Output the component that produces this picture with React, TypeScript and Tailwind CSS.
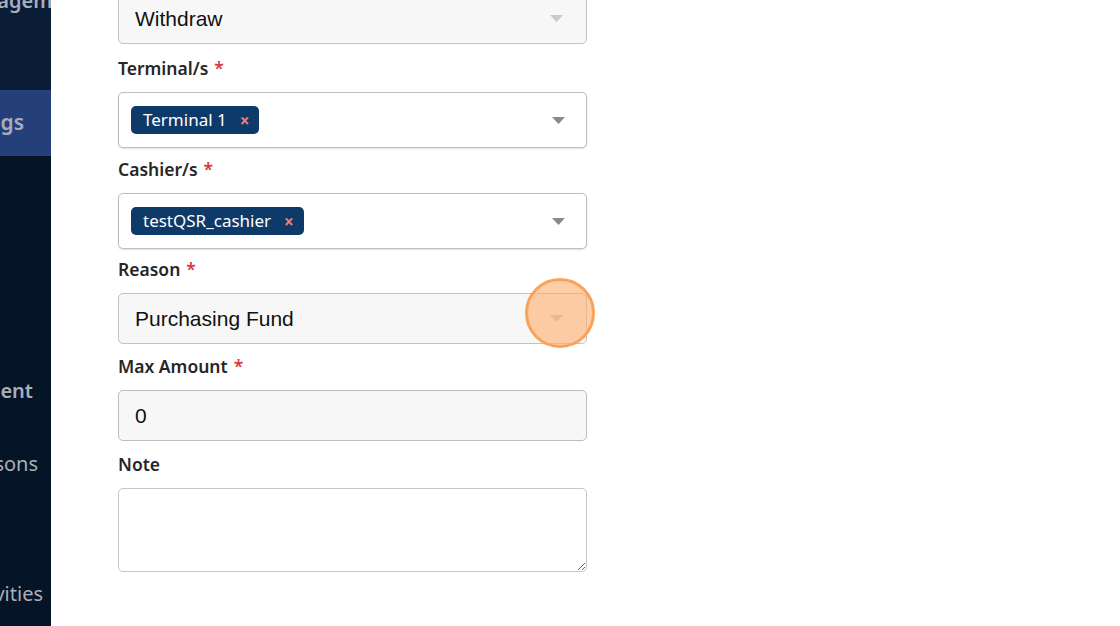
import React from "react";

const sans = "font-['Noto_Sans',_'Open_Sans',_sans-serif]";
const inputFont = "font-['Liberation_Sans',_Arial,_sans-serif]";

function Caret({ light }: { light?: boolean }) {
  return (
    <svg width="13" height="7" viewBox="0 0 13 7" className="shrink-0">
      <path d="M0 0 L13 0 L6.5 7 Z" fill={light ? "#c9c9c9" : "#8a8a8a"} />
    </svg>
  );
}

function Label({ text, required, pt }: { text: string; required?: boolean; pt: string }) {
  return (
    <div className={`${pt} pb-[12px] leading-[24px] text-[17.5px] font-semibold text-[#262626] ${sans}`}>
      {text}
      {required && <span className="ml-[6px] text-[#d93a42]">*</span>}
    </div>
  );
}

function Tag({ text }: { text: string }) {
  return (
    <span
      className={`inline-flex h-[28px] items-center rounded-[5px] bg-[#0d3a69] pl-[12px] pr-[10px] text-[17px] text-white ${sans}`}
    >
      {text}
      <span className="ml-[13px] text-[17px] font-bold leading-none text-[#ec7d7d]">×</span>
    </span>
  );
}

function SelectBox({ value }: { value: string }) {
  return (
    <div className="flex h-[51px] items-center justify-between rounded-[5px] border border-[#c2c2c2] bg-[#f7f7f7] pl-[16px] pr-[23px]">
      <span className={`text-[21px] text-[#111] ${inputFont}`}>{value}</span>
      <Caret light />
    </div>
  );
}

function MultiBox({ tag }: { tag: string }) {
  return (
    <div className="flex h-[56px] items-center justify-between rounded-[5px] border border-[#bdbdbd] bg-white pl-[12px] pr-[21px] shadow-[0_1px_2px_rgba(0,0,0,0.12)]">
      <Tag text={tag} />
      <Caret />
    </div>
  );
}

function Sidebar() {
  const item = "flex justify-end overflow-hidden whitespace-nowrap text-[20px] text-[#a9afba]";
  return (
    <aside className={`flex w-[51px] shrink-0 flex-col bg-[#051427] ${sans}`}>
      <div className="h-[90px] bg-[#0b1d36]">
        <div className={`${item} -mt-[14px] font-semibold`}>
          <span className="-mr-[34px]">Cash Management</span>
        </div>
      </div>
      <div className={`${item} h-[66px] items-center bg-[#243f79] pr-[27px] text-[21px] font-semibold text-[#939db2]`}>
        Settings
      </div>
      <div className={`${item} mt-[221px] h-[28px] items-center pr-[18px] font-semibold`}>
        Cash Management
      </div>
      <div className={`${item} mt-[45px] h-[28px] items-center pr-[13px]`}>
        Reasons
      </div>
      <div className={`${item} mt-[102px] h-[28px] items-center pr-[8px]`}>
        Activities
      </div>
    </aside>
  );
}

export default function App() {
  return (
    <div className="flex h-[626px] w-[1120px] overflow-hidden bg-white">
      <Sidebar />
      <main className="relative flex-1 pl-[67px]">
        <div className="-mt-[7px] w-[469px]">
          <SelectBox value="Withdraw" />

          <Label text="Terminal/s" required pt="pt-[12px]" />
          <MultiBox tag="Terminal 1" />

          <Label text="Cashier/s" required pt="pt-[9px]" />
          <MultiBox tag="testQSR_cashier" />

          <Label text="Reason" required pt="pt-[8px]" />
          <SelectBox value="Purchasing Fund" />

          <Label text="Max Amount" required pt="pt-[10px]" />
          <div className="flex h-[51px] items-center rounded-[5px] border border-[#bdbdbd] bg-[#f7f7f7] pl-[16px]">
            <span className={`text-[21px] text-[#111] ${inputFont}`}>0</span>
          </div>

          <Label text="Note" pt="pt-[11px]" />
          <textarea className="block h-[84px] w-full resize-y rounded-[5px] border border-[#c6c6c6] bg-white outline-none" />
        </div>

        <div className="pointer-events-none absolute left-[474px] top-[278px] h-[70px] w-[70px] rounded-full border-[3px] border-[#f7a35c] bg-[#ffab6b]/60" />
      </main>
    </div>
  );
}
